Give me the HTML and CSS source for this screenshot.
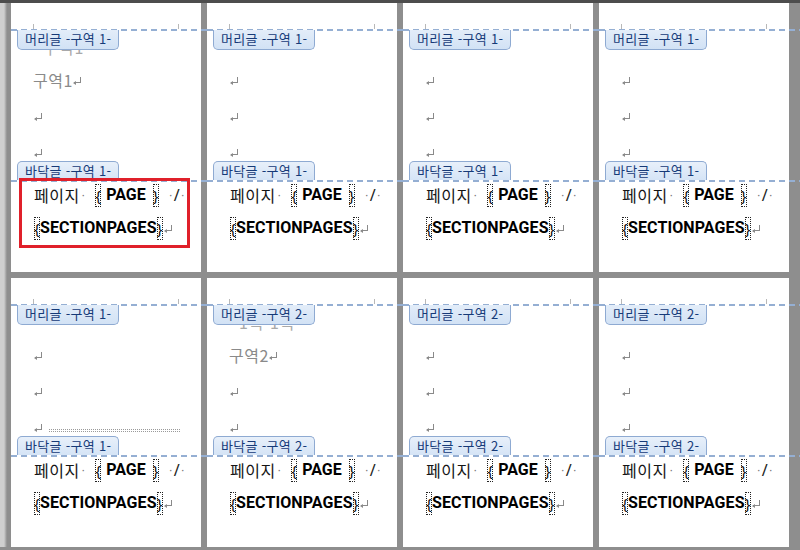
FILE: index.html
```html
<!DOCTYPE html>
<html lang="ko">
<head>
<meta charset="utf-8">
<title>구역 페이지 번호</title>
<link rel="stylesheet" href="styles.css">
</head>
<body>
<div class="topbar"></div>
<div class="grid">

  <!-- Row 1, page 1 -->
  <div class="page">
    <i class="tick tl"></i><i class="tick tr"></i>
    <div class="dash"></div>
    <div class="hlabel">머리글 -구역 1-</div>
    <div class="body">
      <div class="line ghost">구역1</div>
      <div class="line"><span class="kt">구역1</span><span class="pm"></span></div>
      <div class="line"><span class="pm"></span></div>
      <div class="line"><span class="pm"></span></div>
    </div>
    <div class="flabel">바닥글 -구역 1-</div>
    <div class="dash"></div>
    <div class="ftr">
      <div class="fl"><span class="kr">페이지</span><span class="sp s1">·</span><span class="fb">{</span><b class="f1">PAGE</b><span class="fb fb2">}</span><span class="sp s2">·</span><span class="sl">/</span><span class="sp s3">·</span></div>
      <div class="fl"><span class="fb">{</span><b class="f2">SECTIONPAGES</b><span class="fb">}</span><span class="pm"></span></div>
    </div>
    <div class="mark"></div>
  </div>

  <!-- Row 1, page 2 -->
  <div class="page">
    <i class="tick tl"></i><i class="tick tr"></i>
    <div class="dash"></div>
    <div class="hlabel">머리글 -구역 1-</div>
    <div class="body">
      <div class="line ghost"></div>
      <div class="line"><span class="pm"></span></div>
      <div class="line"><span class="pm"></span></div>
      <div class="line"><span class="pm"></span></div>
    </div>
    <div class="flabel">바닥글 -구역 1-</div>
    <div class="dash"></div>
    <div class="ftr">
      <div class="fl"><span class="kr">페이지</span><span class="sp s1">·</span><span class="fb">{</span><b class="f1">PAGE</b><span class="fb fb2">}</span><span class="sp s2">·</span><span class="sl">/</span><span class="sp s3">·</span></div>
      <div class="fl"><span class="fb">{</span><b class="f2">SECTIONPAGES</b><span class="fb">}</span><span class="pm"></span></div>
    </div>
  </div>

  <!-- Row 1, page 3 -->
  <div class="page">
    <i class="tick tl"></i><i class="tick tr"></i>
    <div class="dash"></div>
    <div class="hlabel">머리글 -구역 1-</div>
    <div class="body">
      <div class="line ghost"></div>
      <div class="line"><span class="pm"></span></div>
      <div class="line"><span class="pm"></span></div>
      <div class="line"><span class="pm"></span></div>
    </div>
    <div class="flabel">바닥글 -구역 1-</div>
    <div class="dash"></div>
    <div class="ftr">
      <div class="fl"><span class="kr">페이지</span><span class="sp s1">·</span><span class="fb">{</span><b class="f1">PAGE</b><span class="fb fb2">}</span><span class="sp s2">·</span><span class="sl">/</span><span class="sp s3">·</span></div>
      <div class="fl"><span class="fb">{</span><b class="f2">SECTIONPAGES</b><span class="fb">}</span><span class="pm"></span></div>
    </div>
  </div>

  <!-- Row 1, page 4 -->
  <div class="page last">
    <i class="tick tl"></i><i class="tick tr"></i>
    <div class="dash"></div>
    <div class="hlabel">머리글 -구역 1-</div>
    <div class="body">
      <div class="line ghost"></div>
      <div class="line"><span class="pm"></span></div>
      <div class="line"><span class="pm"></span></div>
      <div class="line"><span class="pm"></span></div>
    </div>
    <div class="flabel">바닥글 -구역 1-</div>
    <div class="dash"></div>
    <div class="ftr">
      <div class="fl"><span class="kr">페이지</span><span class="sp s1">·</span><span class="fb">{</span><b class="f1">PAGE</b><span class="fb fb2">}</span><span class="sp s2">·</span><span class="sl">/</span><span class="sp s3">·</span></div>
      <div class="fl"><span class="fb">{</span><b class="f2">SECTIONPAGES</b><span class="fb">}</span><span class="pm"></span></div>
    </div>
  </div>

  <!-- Row 2, page 5 -->
  <div class="page">
    <i class="tick tl"></i><i class="tick tr"></i>
    <div class="dash"></div>
    <div class="hlabel">머리글 -구역 1-</div>
    <div class="body">
      <div class="line ghost"></div>
      <div class="line"><span class="pm"></span></div>
      <div class="line"><span class="pm"></span></div>
      <div class="line"><span class="pm"></span><span class="brk"></span></div>
    </div>
    <div class="flabel">바닥글 -구역 1-</div>
    <div class="dash"></div>
    <div class="ftr">
      <div class="fl"><span class="kr">페이지</span><span class="sp s1">·</span><span class="fb">{</span><b class="f1">PAGE</b><span class="fb fb2">}</span><span class="sp s2">·</span><span class="sl">/</span><span class="sp s3">·</span></div>
      <div class="fl"><span class="fb">{</span><b class="f2">SECTIONPAGES</b><span class="fb">}</span><span class="pm"></span></div>
    </div>
  </div>

  <!-- Row 2, page 6 -->
  <div class="page">
    <i class="tick tl"></i><i class="tick tr"></i>
    <div class="dash"></div>
    <div class="hlabel">머리글 -구역 2-</div>
    <div class="body">
      <div class="line ghost">1쪽 1쪽</div>
      <div class="line"><span class="kt">구역2</span><span class="pm"></span></div>
      <div class="line"><span class="pm"></span></div>
      <div class="line"><span class="pm"></span></div>
    </div>
    <div class="flabel">바닥글 -구역 2-</div>
    <div class="dash"></div>
    <div class="ftr">
      <div class="fl"><span class="kr">페이지</span><span class="sp s1">·</span><span class="fb">{</span><b class="f1">PAGE</b><span class="fb fb2">}</span><span class="sp s2">·</span><span class="sl">/</span><span class="sp s3">·</span></div>
      <div class="fl"><span class="fb">{</span><b class="f2">SECTIONPAGES</b><span class="fb">}</span><span class="pm"></span></div>
    </div>
  </div>

  <!-- Row 2, page 7 -->
  <div class="page">
    <i class="tick tl"></i><i class="tick tr"></i>
    <div class="dash"></div>
    <div class="hlabel">머리글 -구역 2-</div>
    <div class="body">
      <div class="line ghost"></div>
      <div class="line"><span class="pm"></span></div>
      <div class="line"><span class="pm"></span></div>
      <div class="line"><span class="pm"></span></div>
    </div>
    <div class="flabel">바닥글 -구역 2-</div>
    <div class="dash"></div>
    <div class="ftr">
      <div class="fl"><span class="kr">페이지</span><span class="sp s1">·</span><span class="fb">{</span><b class="f1">PAGE</b><span class="fb fb2">}</span><span class="sp s2">·</span><span class="sl">/</span><span class="sp s3">·</span></div>
      <div class="fl"><span class="fb">{</span><b class="f2">SECTIONPAGES</b><span class="fb">}</span><span class="pm"></span></div>
    </div>
  </div>

  <!-- Row 2, page 8 -->
  <div class="page last">
    <i class="tick tl"></i><i class="tick tr"></i>
    <div class="dash"></div>
    <div class="hlabel">머리글 -구역 2-</div>
    <div class="body">
      <div class="line ghost"></div>
      <div class="line"><span class="pm"></span></div>
      <div class="line"><span class="pm"></span></div>
      <div class="line"><span class="pm"></span></div>
    </div>
    <div class="flabel">바닥글 -구역 2-</div>
    <div class="dash"></div>
    <div class="ftr">
      <div class="fl"><span class="kr">페이지</span><span class="sp s1">·</span><span class="fb">{</span><b class="f1">PAGE</b><span class="fb fb2">}</span><span class="sp s2">·</span><span class="sl">/</span><span class="sp s3">·</span></div>
      <div class="fl"><span class="fb">{</span><b class="f2">SECTIONPAGES</b><span class="fb">}</span><span class="pm"></span></div>
    </div>
  </div>

</div>
</body>
</html>
```

FILE: styles.css
```css
* { box-sizing: border-box; margin: 0; padding: 0; }

html, body {
  margin: 0;
  background: #8e8e8e;
}

body {
  width: 800px;
  height: 550px;
  overflow: hidden;
  font-family: "Noto Sans", "Noto Sans CJK KR", sans-serif;
}

.topbar {
  height: 3px;
  background: #4d4d4d;
}

.grid {
  display: grid;
  grid-template-columns: repeat(4, 190px);
  grid-auto-rows: 269px;
  gap: 6px;
  padding-left: 11px;
  background: linear-gradient(90deg, #cfcfcf 0, #cfcfcf 4px, #8e8e8e 7px);
}

.page {
  position: relative;
  background: #fff;
  padding-top: 26px;
}

.tick {
  position: absolute;
  top: 21px;
  width: 1px;
  height: 5px;
  background: #b8b8b8;
}
.tl { left: 22px; }
.tr { left: 167px; }

.dash {
  height: 2px;
  width: calc(100% + 6px);
  background: repeating-linear-gradient(90deg, #95afd3 0, #95afd3 6px, transparent 6px, transparent 10px);
}
.page.last .dash { width: calc(100% + 11px); }

.hlabel, .flabel {
  position: absolute;
  left: 6px;
  width: 102px;
  z-index: 2;
  border: 1px solid #8eaad2;
  font-family: "Noto Sans CJK KR", sans-serif;
  font-size: 13px;
  letter-spacing: 0.3px;
  color: #163a78;
  padding-left: 7px;
  white-space: nowrap;
}

.hlabel {
  top: 27px;
  height: 20px;
  line-height: 18px;
  border-top: none;
  border-radius: 0 0 5px 5px;
  background: linear-gradient(#e3edf9, #d2e2f5);
}

.flabel {
  top: 158px;
  height: 19px;
  line-height: 18px;
  border-bottom: none;
  border-radius: 5px 5px 0 0;
  background: linear-gradient(#e8f0fa, #d5e4f6);
}

.body {
  height: 149px;
  padding-left: 22px;
  color: #8a8a8a;
  font-family: "Noto Sans CJK KR", sans-serif;
  font-size: 16px;
}

.line {
  height: 36px;
  display: flex;
  align-items: center;
  white-space: nowrap;
}

.line.ghost {
  height: 31px;
  padding-left: 10px;
  color: #a9a9a9;
  letter-spacing: 1px;
}

.kt {
  letter-spacing: 0.5px;
  margin-right: -0.5px;
}

.pm {
  display: inline-block;
  position: relative;
  width: 7px;
  height: 6px;
  margin-left: 2px;
  border-right: 1px solid #8a8a8a;
  border-bottom: 1px solid #8a8a8a;
  flex: none;
}
.pm::before {
  content: "";
  position: absolute;
  left: -1px;
  bottom: -3px;
  width: 0;
  height: 0;
  border-top: 2.5px solid transparent;
  border-bottom: 2.5px solid transparent;
  border-right: 3px solid #8a8a8a;
}

.brk {
  display: inline-block;
  width: 131px;
  height: 3px;
  margin-left: 7px;
  margin-top: 6px;
  border-top: 1px dotted #9a9a9a;
  border-bottom: 1px dotted #9a9a9a;
}

.ftr {
  margin-top: -4px;
  padding-left: 23px;
  font-size: 16px;
  color: #000;
}

.fl {
  height: 33px;
  display: flex;
  align-items: center;
  white-space: nowrap;
}

.kr {
  font-family: "Noto Sans CJK KR", sans-serif;
  font-size: 16px;
  letter-spacing: 0.5px;
  margin-right: -0.5px;
  color: #151515;
}

.sp {
  display: inline-block;
  width: 6px;
  text-align: center;
  font-size: 11px;
  color: #777;
}
.s1 { margin-left: 1px; }
.s2 { width: 6px; margin-left: 9px; }
.s3 { width: 8px; }

.sl {
  display: inline-block;
  width: 5px;
  text-align: center;
  color: #222;
}

.fb {
  display: inline-flex;
  justify-content: center;
  align-items: center;
  width: 6px;
  height: 23px;
  margin-left: 9px;
  border: 1px dotted #222;
  font-family: "Noto Sans", sans-serif;
  font-size: 14px;
  color: #000;
  position: relative;
  top: 1px;
  flex: none;
}
.fl .fb2 { margin-left: 7px; }
.fl:last-child .fb { margin-left: 0; }

b {
  font-family: Roboto, "Noto Sans", sans-serif;
  font-weight: 700;
  font-size: 16px;
  color: #000;
}
.f1 { margin-left: 5px; }
.f2 { letter-spacing: 0.1px; }

.mark {
  position: absolute;
  left: 8px;
  top: 175px;
  width: 171px;
  height: 70px;
  border: 3px solid #e0202a;
  z-index: 3;
}
```
